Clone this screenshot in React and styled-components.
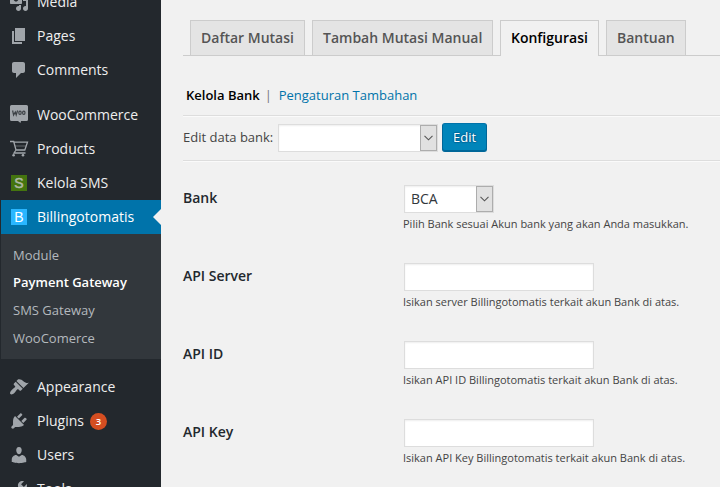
import React from "react";
import styled, { createGlobalStyle } from "styled-components";

const GlobalStyle = createGlobalStyle`
  * { box-sizing: border-box; }
  html, body { margin: 0; padding: 0; overflow: hidden; }
  body {
    background: #f1f1f1;
    color: #444;
    font: 13px/18px "Open Sans", sans-serif;
  }
`;

const Page = styled.div`
  display: flex;
  width: 720px;
  height: 487px;
  overflow: hidden;
`;

const Sidebar = styled.nav`
  flex: none;
  width: 161px;
  height: 487px;
  padding-left: 1px;
  overflow: hidden;
  background: #23282d;
`;

const MenuList = styled.div`
  margin-top: -15px;
`;

const MenuItem = styled.a`
  position: relative;
  display: flex;
  align-items: center;
  height: 34px;
  padding-left: 8px;
  color: ${(p) => (p.$active ? "#fff" : "#eee")};
  background: ${(p) => (p.$active ? "#0073aa" : "transparent")};
  font-size: 14px;
  line-height: 18px;
`;

const ActiveArrow = styled.span`
  position: absolute;
  right: 0;
  top: 9px;
  border: 8px solid transparent;
  border-left-width: 0;
  border-right-color: #f1f1f1;
`;

const IconBox = styled.span`
  display: flex;
  flex: none;
  align-items: center;
  justify-content: center;
  width: 20px;
  height: 20px;
  margin-right: 8px;
`;

const Icon = styled.svg`
  display: block;
  width: 20px;
  height: 20px;
  fill: #a0a5aa;
`;

const LetterTile = styled.span`
  width: 16px;
  height: 16px;
  background: ${(p) => p.$bg};
  color: ${(p) => p.$color};
  font: 14px/17px "Liberation Sans", sans-serif;
  -webkit-text-stroke: ${(p) => p.$stroke || 0}px currentColor;
  text-align: center;
`;

const MenuLabel = styled.span`
  white-space: nowrap;
`;

const Gap = styled.div`
  height: 11px;
`;

const Badge = styled.span`
  width: 17px;
  height: 17px;
  margin-left: 6px;
  border-radius: 50%;
  background: #d54e21;
  color: #fff;
  font-size: 9.5px;
  font-weight: 600;
  line-height: 17px;
  text-align: center;
`;

const SubMenu = styled.div`
  height: 125px;
  padding: 8px 0 6px 12px;
  background: #32373c;
`;

const SubItem = styled.a`
  display: block;
  height: 28px;
  line-height: 27px;
  font-size: 13px;
  white-space: nowrap;
  color: ${(p) => (p.$current ? "#fff" : "#b4b9be")};
  font-weight: ${(p) => (p.$current ? 600 : 400)};

  &:first-child {
    height: 27px;
  }
`;

const Main = styled.main`
  flex: 1;
  min-width: 0;
  padding: 20px 0 0 22px;
`;

const Tabs = styled.div`
  display: flex;
  gap: 7px;
  height: 36px;
  padding-left: 7px;
  border-bottom: 1px solid #ccc;
`;

const Tab = styled.a`
  flex: none;
  width: ${(p) => p.$width}px;
  height: ${(p) => (p.$active ? 36 : 35)}px;
  padding-left: 10px;
  border: 1px solid #ccc;
  border-bottom: 0;
  background: ${(p) => (p.$active ? "#f1f1f1" : "#e4e4e4")};
  color: ${(p) => (p.$active ? "#000" : "#555")};
  font-size: 14px;
  font-weight: 600;
  line-height: 34px;
  white-space: nowrap;
`;

const SubNav = styled.div`
  display: flex;
  height: 59px;
  padding: 30px 0 0 3px;
`;

const SubNavLink = styled.a`
  color: ${(p) => (p.$current ? "#000" : "#0073aa")};
  font-weight: ${(p) => (p.$current ? 600 : 400)};
`;

const Divider = styled.span`
  width: 19px;
  padding-left: 5px;
  color: #777;
`;

const Rule = styled.div`
  height: 2px;
  border-top: 1px solid #ddd;
  border-bottom: 1px solid #fafafa;
`;

const EditBar = styled.div`
  display: flex;
  height: 43px;
  padding-top: 6px;
`;

const EditLabel = styled.span`
  width: 95px;
  padding-top: 5px;
  white-space: nowrap;
`;

const SelectBox = styled.div`
  display: flex;
  justify-content: space-between;
  width: ${(p) => p.$width}px;
  height: 28px;
  margin-top: ${(p) => p.$top || 0}px;
  border: 1px solid #ddd;
  background: #fff;
  box-shadow: inset 0 1px 2px rgba(0, 0, 0, 0.07);
  color: #32373c;
  font-size: 14px;
  line-height: 25px;
`;

const SelectText = styled.span`
  padding-left: 6px;
`;

const SelectButton = styled.span`
  display: flex;
  align-items: center;
  justify-content: center;
  width: 17px;
  height: 26px;
  border: 1px solid #adadad;
  background: #e1e1e1;
`;

const Chevron = styled.svg`
  width: 9px;
  height: 6px;
  fill: none;
  stroke: #555;
  stroke-width: 1.1;
`;

const PrimaryButton = styled.button`
  width: 45px;
  height: 29px;
  margin: 0 0 0 4px;
  padding: 0 0 1px;
  border: 1px solid;
  border-color: #0073aa #006799 #006799;
  border-radius: 3px;
  background: #0085ba;
  box-shadow: inset 0 -1px 0 #006799;
  color: #fff;
  font: 13px/26px "Open Sans", sans-serif;
  text-shadow: 0 -1px 1px #006799, 1px 0 1px #006799, 0 1px 1px #006799, -1px 0 1px #006799;
`;

const Form = styled.div`
  padding-top: 23px;
`;

const FormRow = styled.div`
  display: grid;
  grid-template-columns: 221px 1fr;
  height: 78px;
`;

const FieldLabel = styled.label`
  padding-top: 4px;
  color: #23282d;
  font-size: 14px;
  font-weight: 600;
`;

const TextInput = styled.input`
  display: block;
  width: 190px;
  height: 28px;
  border: 1px solid #ddd;
  border-radius: 0;
  background: #fff;
  box-shadow: inset 0 1px 2px rgba(0, 0, 0, 0.07);
  outline: 0;
`;

const Hint = styled.p`
  margin: 2px 0 0 -1px;
  font-size: 11px;
  line-height: 18px;
  white-space: nowrap;
`;

const shapes = {
  media: "M13 11V4c0-.55-.45-1-1-1h-1.67L9 1H5L3.67 3H2c-.55 0-1 .45-1 1v7c0 .55.45 1 1 1h10c.55 0 1-.45 1-1zM7 4.5c1.38 0 2.5 1.12 2.5 2.5S8.38 9.5 7 9.5 4.5 8.38 4.5 7 5.62 4.5 7 4.5zM14 6h5v10.5c0 1.38-1.12 2.5-2.5 2.5S14 17.88 14 16.5s1.12-2.5 2.5-2.5c.17 0 .34.02.5.05V9h-3V6zm-4 8.05V13h2v3.5c0 1.38-1.12 2.5-2.5 2.5S7 17.88 7 16.5 8.12 14 9.5 14c.17 0 .34.02.5.05z",
  pages: "M6 15V2h10v13H6zm-1 1h8v2H3V5h2v11z",
  comments: "M5 2h9c1.1 0 2 .9 2 2v7c0 1.1-.9 2-2 2h-2l-5 5v-5H5c-1.1 0-2-.9-2-2V4c0-1.1.9-2 2-2z",
  appearance: "M14.48 11.06L7.41 3.99l1.5-1.5c.5-.56 2.3-.47 3.51.32 1.21.8 1.43 1.28 2.91 2.1 1.18.64 2.45 1.26 4.45.85zm-.71.71L6.7 4.7 4.93 6.47c-.39.39-.39 1.02 0 1.41l1.06 1.06c.39.39.39 1.03 0 1.42-.6.6-1.43 1.11-2.21 1.69-.35.26-.7.53-1.01.84C1.43 14.23.4 16.08 1.4 17.07c.99 1 2.84-.03 4.18-1.36.31-.31.58-.66.85-1.02.57-.78 1.08-1.61 1.69-2.21.39-.39 1.02-.39 1.41 0l1.06 1.06c.39.39 1.02.39 1.41 0z",
  plugins: "M13.11 4.36L9.87 7.6 8 5.73l3.24-3.24c.35-.34 1.05-.2 1.56.32.52.51.66 1.21.31 1.55zm-8 1.77l.91-1.12 9.01 9.01-1.19.84c-.71.71-2.63 1.16-3.82 1.16H6.14L4.9 17.26c-.59.59-1.54.59-2.12 0-.59-.58-.59-1.53 0-2.12l1.24-1.24v-3.88c0-1.13.4-3.19 1.09-3.89zm7.26 3.97l3.24-3.24c.34-.35 1.04-.21 1.55.31.52.51.66 1.21.31 1.55l-3.24 3.25z",
  users: "M10 9.25c-2.27 0-2.73-3.44-2.73-3.44C7 4.02 7.82 2 9.97 2c2.16 0 2.98 2.02 2.71 3.81 0 0-.41 3.44-2.68 3.44zm0 2.57L12.72 10c2.39 0 4.52 2.33 4.52 4.53v2.49s-3.65 1.13-7.24 1.13c-3.65 0-7.24-1.13-7.24-1.13v-2.49c0-2.25 1.94-4.48 4.47-4.48z",
  tools: "M16.68 9.77c-1.34 1.34-3.3 1.67-4.95.99l-5.41 6.52c-.99.99-2.59.99-3.58 0s-.99-2.59 0-3.57l6.52-5.42c-.68-1.65-.35-3.61.99-4.95 1.28-1.28 3.12-1.62 4.72-1.06l-2.89 2.89 2.82 2.82 2.86-2.87c.53 1.58.18 3.39-1.08 4.65z",
};

const Glyph = ({ name }) => (
  <Icon viewBox="0 0 20 20">
    <path d={shapes[name]} />
  </Icon>
);

const WooIcon = () => (
  <Icon viewBox="0 0 20 20">
    <path d="M2.500 0h15Q19 0 19 1.500v13Q19 16 17.500 16H12l-.5 2L9 16H2.500Q1 16 1 14.500v-13Q1 0 2.500 0z" />
    <g fill="none" stroke="#3c4146" strokeWidth="1.200">
      <path d="M3.600 5.500l1 4.500 1.700-3 .9 3L8.600 5.500" />
      <ellipse cx="11" cy="7.800" rx="1.200" ry="1.700" />
      <ellipse cx="14.800" cy="7.800" rx="1.200" ry="1.700" />
    </g>
  </Icon>
);

const CartIcon = () => (
  <Icon viewBox="0 0 20 20">
    <g fill="none" stroke="#a0a5aa" strokeWidth="1.300">
      <path d="M1 2.500h3.700l2.300 8.500h8.800L18.500 3.200H5M7 11l-2 3h11.500" />
      <path d="M6 7h11" strokeWidth=".5" />
    </g>
    <circle cx="4.600" cy="16.200" r="1.300" />
    <circle cx="14" cy="16.200" r="1.300" />
  </Icon>
);

const Item = ({ icon, label, active, children }) => (
  <MenuItem $active={active}>
    <IconBox>{icon}</IconBox>
    <MenuLabel>{label}</MenuLabel>
    {children}
    {active && <ActiveArrow />}
  </MenuItem>
);

const Select = ({ width, top, value }) => (
  <SelectBox $width={width} $top={top}>
    <SelectText>{value}</SelectText>
    <SelectButton>
      <Chevron viewBox="0 0 9 6">
        <path d="M.5.8l4 4 4-4" />
      </Chevron>
    </SelectButton>
  </SelectBox>
);

const Field = ({ label, hint, children }) => (
  <FormRow>
    <FieldLabel>{label}</FieldLabel>
    <div>
      {children || <TextInput aria-label={label} />}
      <Hint>{hint}</Hint>
    </div>
  </FormRow>
);

export default function App() {
  return (
    <Page>
      <GlobalStyle />
      <Sidebar>
        <MenuList>
          <Item icon={<Glyph name="media" />} label="Media" />
          <Item icon={<Glyph name="pages" />} label="Pages" />
          <Item icon={<Glyph name="comments" />} label="Comments" />
          <Gap />
          <Item icon={<WooIcon />} label="WooCommerce" />
          <Item icon={<CartIcon />} label="Products" />
          <Item
            icon={<LetterTile $bg="#44740f" $color="#b0b8a8" $stroke={0.5}>S</LetterTile>}
            label="Kelola SMS"
          />
          <Item active icon={<LetterTile $bg="#29b6ff" $color="#fff">B</LetterTile>} label="Billingotomatis" />
          <SubMenu>
            <SubItem>Module</SubItem>
            <SubItem $current>Payment Gateway</SubItem>
            <SubItem>SMS Gateway</SubItem>
            <SubItem>WooComerce</SubItem>
          </SubMenu>
          <Gap />
          <Item icon={<Glyph name="appearance" />} label="Appearance" />
          <Item icon={<Glyph name="plugins" />} label="Plugins">
            <Badge>3</Badge>
          </Item>
          <Item icon={<Glyph name="users" />} label="Users" />
          <Item icon={<Glyph name="tools" />} label="Tools" />
        </MenuList>
      </Sidebar>
      <Main>
        <Tabs>
          <Tab $width={115}>Daftar Mutasi</Tab>
          <Tab $width={181}>Tambah Mutasi Manual</Tab>
          <Tab $width={99} $active>Konfigurasi</Tab>
          <Tab $width={80}>Bantuan</Tab>
        </Tabs>
        <SubNav>
          <SubNavLink $current>Kelola Bank</SubNavLink>
          <Divider>|</Divider>
          <SubNavLink>Pengaturan Tambahan</SubNavLink>
        </SubNav>
        <Rule />
        <EditBar>
          <EditLabel>Edit data bank:</EditLabel>
          <Select width={160} top={1} value="" />
          <PrimaryButton>Edit</PrimaryButton>
        </EditBar>
        <Rule />
        <Form>
          <Field label="Bank" hint="Pilih Bank sesuai Akun bank yang akan Anda masukkan.">
            <Select width={90} value="BCA" />
          </Field>
          <Field label="API Server" hint="Isikan server Billingotomatis terkait akun Bank di atas." />
          <Field label="API ID" hint="Isikan API ID Billingotomatis terkait akun Bank di atas." />
          <Field label="API Key" hint="Isikan API Key Billingotomatis terkait akun Bank di atas." />
        </Form>
      </Main>
    </Page>
  );
}
